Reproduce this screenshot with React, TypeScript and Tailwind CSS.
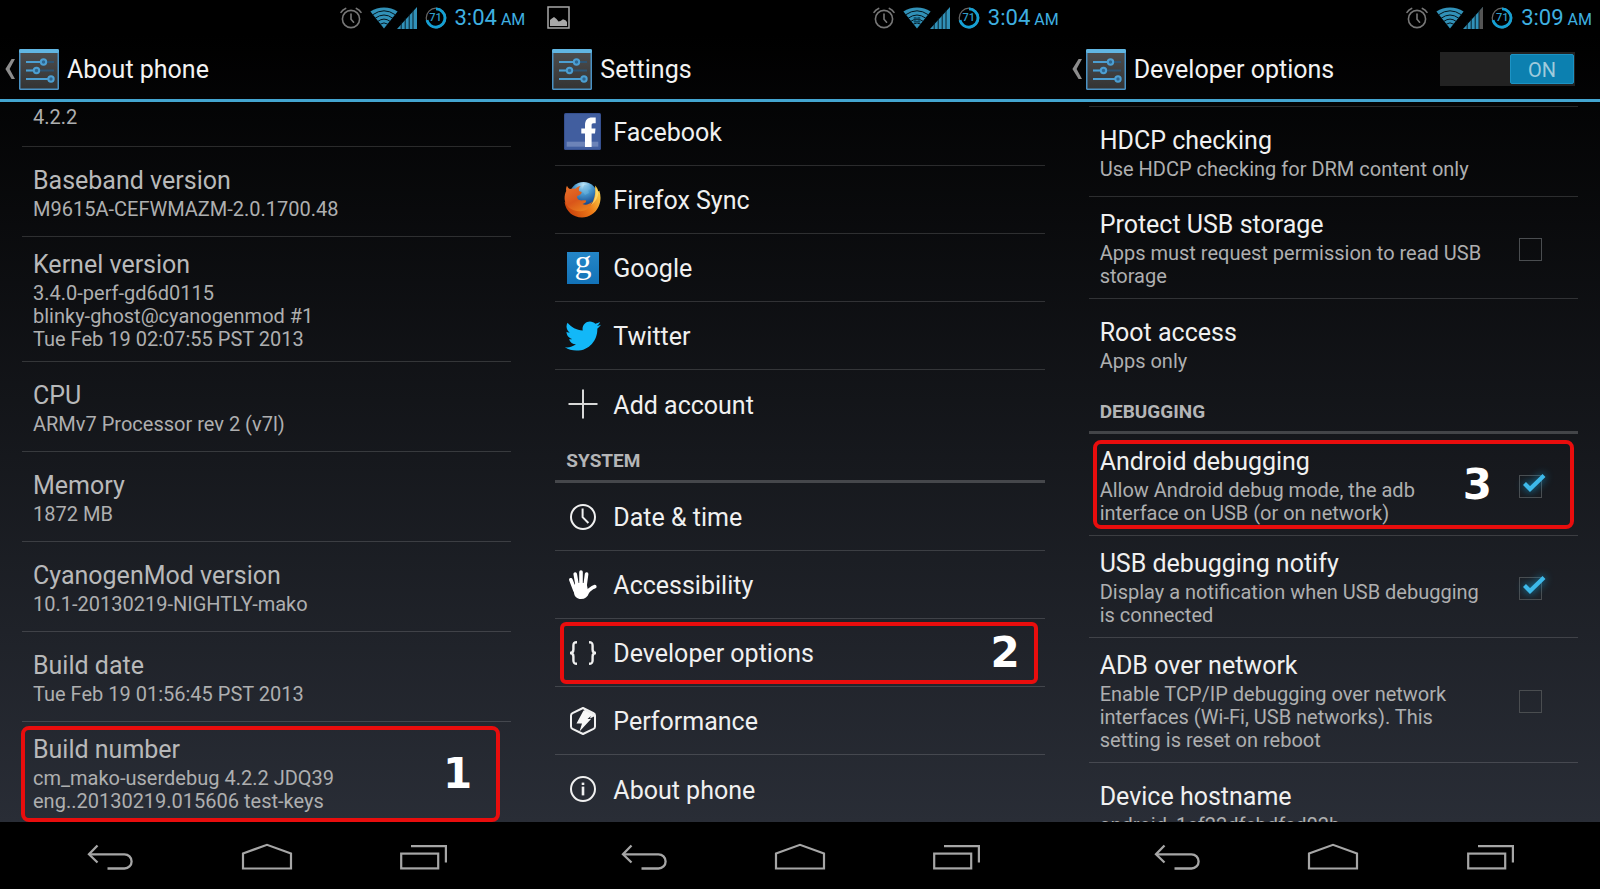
import React, { useState } from "react";
import { FaTwitter } from "react-icons/fa";

type IconProps = { className?: string };

/* ---------- status bar icons ---------- */

function AlarmIcon() {
  return (
    <svg viewBox="0 0 22 22" className="size-[22px]" fill="none" stroke="#777" strokeWidth="1.6" strokeLinecap="round">
      <circle cx="11" cy="12" r="8.6" />
      <path d="M11 7v5.2l2.6 3" />
      <path d="M1 5.4Q2.6 2.6 5.6 1.4M21 5.4Q19.4 2.6 16.4 1.4" />
    </svg>
  );
}

function WifiIcon({ active = false }: { active?: boolean }) {
  return (
    <svg viewBox="0 0 28 22" className="h-[22px] w-7">
      <path d="M14 21.5 0.4 4.6Q6.400 0.400 14 0.400T27.600 4.600Z" fill="#3191b8" />
      <g fill="none" stroke="#04141c" strokeWidth="1">
        <path d="M2.600 7.800Q14 -0.200 25.400 7.800" />
        <path d="M5.200 11.200Q14 4.800 22.800 11.200" />
        <path d="M7.800 14.400Q14 9.800 20.200 14.400" />
        <path d="M10.200 17.200Q14 14.600 17.800 17.200" />
      </g>
      {active && <path d="M10.600 11h6.800M10.600 14.400h6.800M12 10v6M16 10v6" stroke="#0a4a66" strokeWidth="1.2" fill="none" />}
    </svg>
  );
}

function SignalIcon({ weak = false }: { weak?: boolean }) {
  return (
    <svg viewBox="0 0 20 22" className="h-[22px] w-5">
      <path d="M0 22 20 0V22Z" fill="#3191b8" />
      {weak && <path d="M16 4.400 20 0V22H16Z" fill="#555" />}
      <path d="M4.200 15V22M8.200 11V22M12.200 7V22M16 3V22" stroke="#04141c" strokeWidth="0.9" />
    </svg>
  );
}

function BatteryRing() {
  return (
    <span className="grid size-[22px] place-items-center">
      <svg viewBox="0 0 22 22" className="col-start-1 row-start-1 size-[22px]" fill="none">
        <circle cx="11" cy="11" r="9.800" stroke="#666" strokeWidth="1.200" />
        <path d="M11 1.900a9.100 9.100 0 1 1-9 11.200" stroke="#14a0d4" strokeWidth="2.800" />
      </svg>
      <span className="col-start-1 row-start-1 text-[11px] leading-none font-medium text-[#2f9cc6]">71</span>
    </span>
  );
}

function PictureIcon() {
  return (
    <svg viewBox="0 0 23 23" className="size-[23px]">
      <rect x="1" y="1" width="21" height="21" fill="none" stroke="#a8a8a8" strokeWidth="1.500" />
      <path d="M3 20v-6l1.500-1.200L7 11l2.500 2 2 2.500 2-.5 2.500-1.800 2.500 1L20 16v4Z" fill="#a8a8a8" />
    </svg>
  );
}

/* ---------- action bar icons ---------- */

function BackChevron() {
  return (
    <svg viewBox="0 0 10 20" className="h-5 w-[10px]">
      <path d="M10 0H6.600L0.400 10 6.600 20H10L4.600 10Z" fill="#8c8c8c" />
    </svg>
  );
}

function SettingsLogo() {
  return (
    <svg viewBox="0 0 40 41" className="h-[41px] w-10">
      <defs>
        <linearGradient id="tile" x1="0" y1="0" x2="0" y2="1">
          <stop offset="0" stopColor="#4c4c4c" />
          <stop offset="1" stopColor="#343434" />
        </linearGradient>
      </defs>
      <rect x="0" y="0" width="40" height="41" rx="1.500" fill="#4a92c4" />
      <rect x="0" y="0" width="40" height="4" rx="1.500" fill="#61b6e2" />
      <rect x="1.500" y="4" width="37" height="35.500" fill="url(#tile)" />
      <g strokeWidth="2">
        <path d="M7 13h28M7 21.500h28M7 30h28" stroke="#2d5473" />
        <path d="M7 13h15M7 21.500h8M7 30h22" stroke="#4c9fd2" />
        <g fill="#2f6690" stroke="#4c9fd2">
          <circle cx="24.500" cy="13" r="2.700" />
          <circle cx="17.500" cy="21.500" r="2.700" />
          <circle cx="32" cy="30" r="2.700" />
        </g>
      </g>
    </svg>
  );
}

/* ---------- list icons ---------- */

function FacebookIcon() {
  return (
    <svg viewBox="0 0 37 37" className="size-[37px]">
      <rect width="37" height="37" rx="1.500" fill="#36508f" />
      <rect x="1" y="1" width="35" height="35" rx="1" fill="#415e9f" />
      <rect x="2.700" y="28.700" width="31.600" height="5" fill="#6d84b8" />
      <path d="M21 34V20.400h-3.700v-5H21v-2.900c0-5.400 2.500-7.900 7.200-7.900h3.500v5.600h-2.200c-1.500 0-1.900.7-1.900 2.300v2.900h3.900l-.5 5h-3.400V34Z" fill="#fff" />
    </svg>
  );
}

function FirefoxIcon() {
  return (
    <svg viewBox="0 0 37 37" className="size-[37px]">
      <defs>
        <radialGradient id="globe" cx="0.5" cy="0.100" r="0.900">
          <stop offset="0" stopColor="#bfe6f8" />
          <stop offset="0.350" stopColor="#4a9bd0" />
          <stop offset="0.750" stopColor="#1a4f94" />
          <stop offset="1" stopColor="#0b2a5c" />
        </radialGradient>
        <linearGradient id="tail" x1="0" y1="0.700" x2="1" y2="0.200">
          <stop offset="0" stopColor="#c8400c" />
          <stop offset="0.550" stopColor="#ee7a17" />
          <stop offset="1" stopColor="#fbd24a" />
        </linearGradient>
        <linearGradient id="fox" x1="0" y1="0" x2="0.600" y2="1">
          <stop offset="0" stopColor="#e8722a" />
          <stop offset="0.600" stopColor="#d9551a" />
          <stop offset="1" stopColor="#e87b1d" />
        </linearGradient>
      </defs>
      <circle cx="19.500" cy="15" r="14" fill="url(#globe)" />
      <path d="M20 4c3 0 6 1.500 7 4l-3 1 1 3-4 2-3-4 1-3Z" fill="#6db6e0" opacity="0.500" />
      <path d="M31 4.500c2 2 3 4 3.300 6l1-.8c1.800 5 1.700 11-.8 16-3 6.500-9.500 10.800-16.500 10.800C9 36.500 1.500 30 .6 21l13 4c4 3 12 2 14.500-3 2.500-4.500 4-11 2.900-17.500Z" fill="url(#tail)" />
      <path d="M3 4.800c.6 1.600 1.600 2.600 3 3.200 1.800-.7 4-.7 5.500-.3 1-1.400 3-2.500 5.200-2.700-1.600 1.400-2 3-1.700 5l2.700 1c.2 2-2 3-4.500 4-.6 1.600.5 3.800 3 4.300 2 .4 3.600-.6 5.800.2.600 1.200-.8 2.800-3.500 3.600 3 1.200 7 .4 9.500-2.600-1 6-6 10-12 9.800C7 30 1 25 .6 18 .5 15 1 12 2.200 10c-.3-1.800-.1-3.600.8-5.200Z" fill="url(#fox)" />
      <path d="M31 6c1.500 6 .5 13-4 18 5-3 7.500-9 7.300-13Z" fill="#fde27a" opacity="0.700" />
    </svg>
  );
}

function GoogleIcon() {
  return (
    <svg viewBox="0 0 32 32" className="size-8">
      <defs>
        <linearGradient id="gtile" x1="0" y1="0" x2="0" y2="1">
          <stop offset="0" stopColor="#2486c8" />
          <stop offset="1" stopColor="#1272b8" />
        </linearGradient>
      </defs>
      <rect width="32" height="32" fill="url(#gtile)" />
      <text x="16" y="21" textAnchor="middle" fill="#fff" className="font-['Liberation_Serif',serif] text-[34px]">
        g
      </text>
    </svg>
  );
}

function PlusIcon() {
  return (
    <svg viewBox="0 0 30 30" className="size-[30px]">
      <path d="M15 .500v29M.500 15h29" stroke="#d8d8d8" strokeWidth="2" />
    </svg>
  );
}

function ClockIcon() {
  return (
    <svg viewBox="0 0 28 28" className="size-7" fill="none" stroke="#f0f0f0">
      <circle cx="14" cy="14" r="12" strokeWidth="2" />
      <path d="M13.600 5.500v8.700l5.800 5.800" strokeWidth="2" />
    </svg>
  );
}

function HandIcon() {
  return (
    <svg viewBox="0 0 28 29" className="h-[29px] w-7" stroke="#fff" fill="none" strokeLinecap="round" strokeLinejoin="round">
      <g strokeWidth="3.600">
        <path d="M1.900 9.800 5.800 20" />
        <path d="M6.200 4 8.300 16" />
        <path d="M12 2V16" />
        <path d="M17.600 4 16 16" />
        <path d="M25.800 16.600c-2.600.4-4.400 2.600-7 4.800" />
      </g>
      <path d="M4 16.500 7 13h10.500l1.300 6.500 3.700-1.500-2.500 5C18.500 27 16 29 12 29s-6.500-2.500-7-6Z" fill="#fff" stroke="none" />
    </svg>
  );
}

function BracesIcon() {
  return (
    <svg viewBox="0 0 28 24" className="h-6 w-7" fill="none" stroke="#f0f0f0" strokeWidth="2.400">
      <path d="M8 1.200C5 1.200 4.400 2.200 4.400 4.800V8.600C4.400 10.800 3.600 12 1 12c2.600 0 3.400 1.200 3.400 3.400v3.800c0 2.600.6 3.600 3.600 3.600" />
      <path d="M20 1.200c3 0 3.600 1 3.600 3.600V8.600c0 2.200.8 3.400 3.400 3.400-2.600 0-3.400 1.200-3.400 3.400v3.800c0 2.600-.6 3.600-3.600 3.600" />
    </svg>
  );
}

function PerformanceIcon() {
  return (
    <svg viewBox="0 0 28 30" className="h-[30px] w-7">
      <path d="M14 2 24.500 7.200Q26 8 26 9.600V20.400Q26 22 24.500 22.800L14 28 3.500 22.800Q2 22 2 20.400V9.600Q2 8 3.500 7.200Z" fill="none" stroke="#f0f0f0" strokeWidth="2" strokeLinejoin="round" />
      <path d="M14.500 2.500 25 8 26 10 21 12.500 22 8.500 16.500 8Z" fill="#f0f0f0" />
      <path d="M14.500 4.500 23.500 8.500 18.500 13H22L10.500 25.500 13 17.500H7.500Z" fill="#f8f8f8" />
    </svg>
  );
}

function InfoIcon() {
  return (
    <svg viewBox="0 0 28 28" className="size-7">
      <circle cx="14" cy="14" r="12" fill="none" stroke="#f0f0f0" strokeWidth="2" />
      <rect x="12.700" y="7.600" width="2.600" height="2.400" fill="#f0f0f0" />
      <rect x="12.700" y="11.600" width="2.600" height="8.800" fill="#f0f0f0" />
    </svg>
  );
}

/* ---------- navigation bar icons ---------- */

function NavBackIcon({ className }: IconProps) {
  return (
    <svg viewBox="0 0 46 28" className={className} fill="none" stroke="#a6a6a6" strokeWidth="2.300">
      <path d="M10.500 2.500 2 11.300l8.500 8.200" />
      <path d="M2 11.300h35.500a7.100 7.100 0 0 1 0 14.200H20.500" />
    </svg>
  );
}

function NavHomeIcon({ className }: IconProps) {
  return (
    <svg viewBox="0 0 52 28" className={className} fill="none" stroke="#a6a6a6" strokeWidth="2.200">
      <path d="M2 25.500V10.500L26 1.800 50 10.500V25.500Z" />
    </svg>
  );
}

function NavRecentsIcon({ className }: IconProps) {
  return (
    <svg viewBox="0 0 48 28" className={className} fill="none" stroke="#a6a6a6" strokeWidth="2.200">
      <rect x="2.200" y="10.600" width="37" height="14.800" />
      <path d="M12 3.100H46.900V19.500" />
    </svg>
  );
}

/* ---------- shared layout ---------- */

function StatusBar({ time, picture, active, weak }: { time: string; picture?: boolean; active?: boolean; weak?: boolean }) {
  return (
    <div className="flex h-[35px] shrink-0 items-center bg-black pr-2 pl-[14px] text-[#3fb0e0]">
      {picture && <PictureIcon />}
      <div className="ml-auto flex items-center">
        <AlarmIcon />
        <span className="ml-2 flex items-center">
          <WifiIcon active={active} />
          <span className="-ml-px flex">
            <SignalIcon weak={weak} />
          </span>
        </span>
        <span className="ml-2 flex">
          <BatteryRing />
        </span>
        <span className="ml-2 flex items-baseline gap-1">
          <span className="text-[22px] leading-8">{time}</span>
          <span className="text-[16px]">AM</span>
        </span>
      </div>
    </div>
  );
}

function ActionBar({ title, up, children }: { title: string; up?: boolean; children?: React.ReactNode }) {
  return (
    <header className="flex h-[67px] shrink-0 items-center border-b-[3px] border-[#43a5d0] pr-[25px] pl-[5px]">
      <button type="button" aria-label={up ? "Navigate up" : "Settings home"} className="flex items-center gap-1 pt-1">
        <span className="flex w-[10px]">{up && <BackChevron />}</span>
        <SettingsLogo />
      </button>
      <h1 className="pt-[5px] pl-2 text-[25px] leading-[30px] text-[#f3f3f3]">{title}</h1>
      {children}
    </header>
  );
}

function NavBar() {
  return (
    <nav className="flex h-[67px] shrink-0 items-center bg-black px-8 pt-[2px]">
      <button type="button" aria-label="Back" className="flex flex-1 justify-center">
        <NavBackIcon className="h-7 w-[46px]" />
      </button>
      <button type="button" aria-label="Home" className="flex flex-1 justify-center">
        <NavHomeIcon className="h-7 w-[52px]" />
      </button>
      <button type="button" aria-label="Recent apps" className="flex flex-1 justify-center">
        <NavRecentsIcon className="h-7 w-12" />
      </button>
    </nav>
  );
}

function Phone({ bar, header, children }: { bar: React.ReactNode; header: React.ReactNode; children: React.ReactNode }) {
  return (
    <section className="flex h-full min-h-0 min-w-0 flex-col">
      {bar}
      <div className="flex min-h-0 flex-1 flex-col bg-linear-to-b/srgb from-black to-[#292d36]">
        {header}
        <div className="min-h-0 flex-1 overflow-hidden px-[22px]">{children}</div>
      </div>
      <NavBar />
    </section>
  );
}

function Step({ n, className }: { n: number; className: string }) {
  return (
    <span
      className={`pointer-events-none absolute flex items-center justify-end border-4 border-[#e90d0d] font-['DejaVu_Sans',sans-serif] text-[42px] leading-none font-bold text-white ${className}`}
    >
      {n}
    </span>
  );
}

function SectionTitle({ children }: { children: React.ReactNode }) {
  return (
    <h2 className="flex h-[45px] items-center border-b-[3px] border-white/20 px-[11px] pt-1 text-[19px] font-bold text-[#b4b5b7]">
      {children}
    </h2>
  );
}

function Pref({
  title,
  summary,
  muted,
  last,
  control,
  children,
}: {
  title: string;
  summary: string;
  muted?: boolean;
  last?: boolean;
  control?: React.ReactNode;
  children?: React.ReactNode;
}) {
  const Wrapper = control ? "label" : "div";
  return (
    <li className={`relative flex min-h-[90px] ${last ? "" : "border-b border-white/15"}`}>
      <Wrapper className="flex flex-1 items-center justify-between pt-[13px] pr-9 pb-[10px] pl-[11px]">
        <span className="block">
          <span className={`block text-[25px] leading-[30px] ${muted ? "text-[#b8b9ba]" : "text-[#f0f0f0]"}`}>{title}</span>
          <span className="mt-[2px] block text-[20px] leading-[23px] whitespace-pre-line text-[#aeafb0]">{summary}</span>
        </span>
        {control}
      </Wrapper>
      {children}
    </li>
  );
}

function Check({ on }: { on?: boolean }) {
  const [checked, setChecked] = useState(!!on);
  return (
    <span className="relative flex size-[23px] shrink-0">
      <input
        type="checkbox"
        checked={checked}
        onChange={(e) => setChecked(e.target.checked)}
        className="size-[23px] appearance-none border border-[#4a4d50]"
      />
      {checked && (
        <svg viewBox="0 0 28 24" className="pointer-events-none absolute -top-1 left-0 h-6 w-7 drop-shadow-[0_0_4px_#1391c4]">
          <path d="M5.500 12.500 11 18 25 4.500" fill="none" stroke="#3db9ea" strokeWidth="4.200" />
        </svg>
      )}
    </span>
  );
}

function MenuItem({ icon, label, last, children }: { icon: React.ReactNode; label: string; last?: boolean; children?: React.ReactNode }) {
  return (
    <li className={`relative flex h-[68px] ${last ? "" : "border-b border-white/15"}`}>
      <a href="#" className="flex flex-1 items-center gap-3 pl-[9px] text-[25px] leading-[30px] text-[#f0f0f0]">
        <span className="flex w-[37px] justify-center">{icon}</span>
        <span className="pt-[3px]">{label}</span>
      </a>
      {children}
    </li>
  );
}

function OnSwitch() {
  const [on, setOn] = useState(true);
  return (
    <button
      type="button"
      role="switch"
      aria-checked={on}
      aria-label="Developer options"
      onClick={() => setOn(!on)}
      className={`mt-1 ml-auto flex h-[34px] w-[135px] items-center bg-[#222] p-px ${on ? "justify-end" : "justify-start"}`}
    >
      <span className="flex h-[30px] w-16 items-center justify-center rounded-xs border border-[#1c93c4] bg-[#0c80b0] pt-px text-[20px] text-[#9fcbdc]">
        {on ? "ON" : "OFF"}
      </span>
    </button>
  );
}

export default function App() {
  return (
    <main className="grid h-screen grid-cols-3 overflow-hidden bg-black font-[Roboto,sans-serif]">
      <Phone bar={<StatusBar time="3:04" />} header={<ActionBar title="About phone" up />}>
        <ul>
          <li className="h-[45px] border-b border-white/15 px-[11px] pt-1 text-[20px] leading-[23px] text-[#aeafb0]">4.2.2</li>
          <Pref muted title="Baseband version" summary="M9615A-CEFWMAZM-2.0.1700.48" />
          <Pref
            muted
            title="Kernel version"
            summary={"3.4.0-perf-gd6d0115\nblinky-ghost@cyanogenmod #1\nTue Feb 19 02:07:55 PST 2013"}
          />
          <Pref muted title="CPU" summary="ARMv7 Processor rev 2 (v7l)" />
          <Pref muted title="Memory" summary="1872 MB" />
          <Pref muted title="CyanogenMod version" summary="10.1-20130219-NIGHTLY-mako" />
          <Pref muted title="Build date" summary="Tue Feb 19 01:56:45 PST 2013" />
          <Pref muted last title="Build number" summary={"cm_mako-userdebug 4.2.2 JDQ39\neng..20130219.015606 test-keys"}>
            <Step n={1} className="top-1 right-[11px] bottom-px -left-px rounded-lg pr-6" />
          </Pref>
        </ul>
      </Phone>

      <Phone bar={<StatusBar time="3:04" picture active />} header={<ActionBar title="Settings" />}>
        <ul className="-mt-1">
          <MenuItem icon={<FacebookIcon />} label="Facebook" />
          <MenuItem icon={<FirefoxIcon />} label="Firefox Sync" />
          <MenuItem icon={<GoogleIcon />} label="Google" />
          <MenuItem icon={<FaTwitter className="size-9 text-[#12b8f8]" />} label="Twitter" />
          <MenuItem icon={<PlusIcon />} label="Add account" last />
        </ul>
        <SectionTitle>SYSTEM</SectionTitle>
        <ul>
          <MenuItem icon={<ClockIcon />} label="Date &amp; time" />
          <MenuItem icon={<HandIcon />} label="Accessibility" />
          <MenuItem icon={<BracesIcon />} label="Developer options">
            <Step n={2} className="top-[3px] right-[7px] bottom-[2px] left-[5px] rounded-md pr-[14px]" />
          </MenuItem>
          <MenuItem icon={<PerformanceIcon />} label="Performance" />
          <MenuItem icon={<InfoIcon />} label="About phone" last />
        </ul>
      </Phone>

      <Phone
        bar={<StatusBar time="3:09" weak />}
        header={
          <ActionBar title="Developer options" up>
            <OnSwitch />
          </ActionBar>
        }
      >
        <ul className="mt-1 border-t border-white/15">
          <Pref title="HDCP checking" summary="Use HDCP checking for DRM content only" />
          <Pref
            title="Protect USB storage"
            summary={"Apps must request permission to read USB\nstorage"}
            control={<Check />}
          />
          <Pref last title="Root access" summary="Apps only" />
        </ul>
        <SectionTitle>DEBUGGING</SectionTitle>
        <ul>
          <Pref
            title="Android debugging"
            summary={"Allow Android debug mode, the adb\ninterface on USB (or on network)"}
            control={<Check on />}
          >
            <Step n={3} className="top-[6px] right-1 bottom-[6px] left-1 rounded-lg pr-[78px]" />
          </Pref>
          <Pref
            title="USB debugging notify"
            summary={"Display a notification when USB debugging\nis connected"}
            control={<Check on />}
          />
          <Pref
            title="ADB over network"
            summary={"Enable TCP/IP debugging over network\ninterfaces (Wi-Fi, USB networks). This\nsetting is reset on reboot"}
            control={<Check />}
          />
          <Pref last title="Device hostname" summary="android_1cf22dfcbdfcd02b" />
        </ul>
      </Phone>
    </main>
  );
}
